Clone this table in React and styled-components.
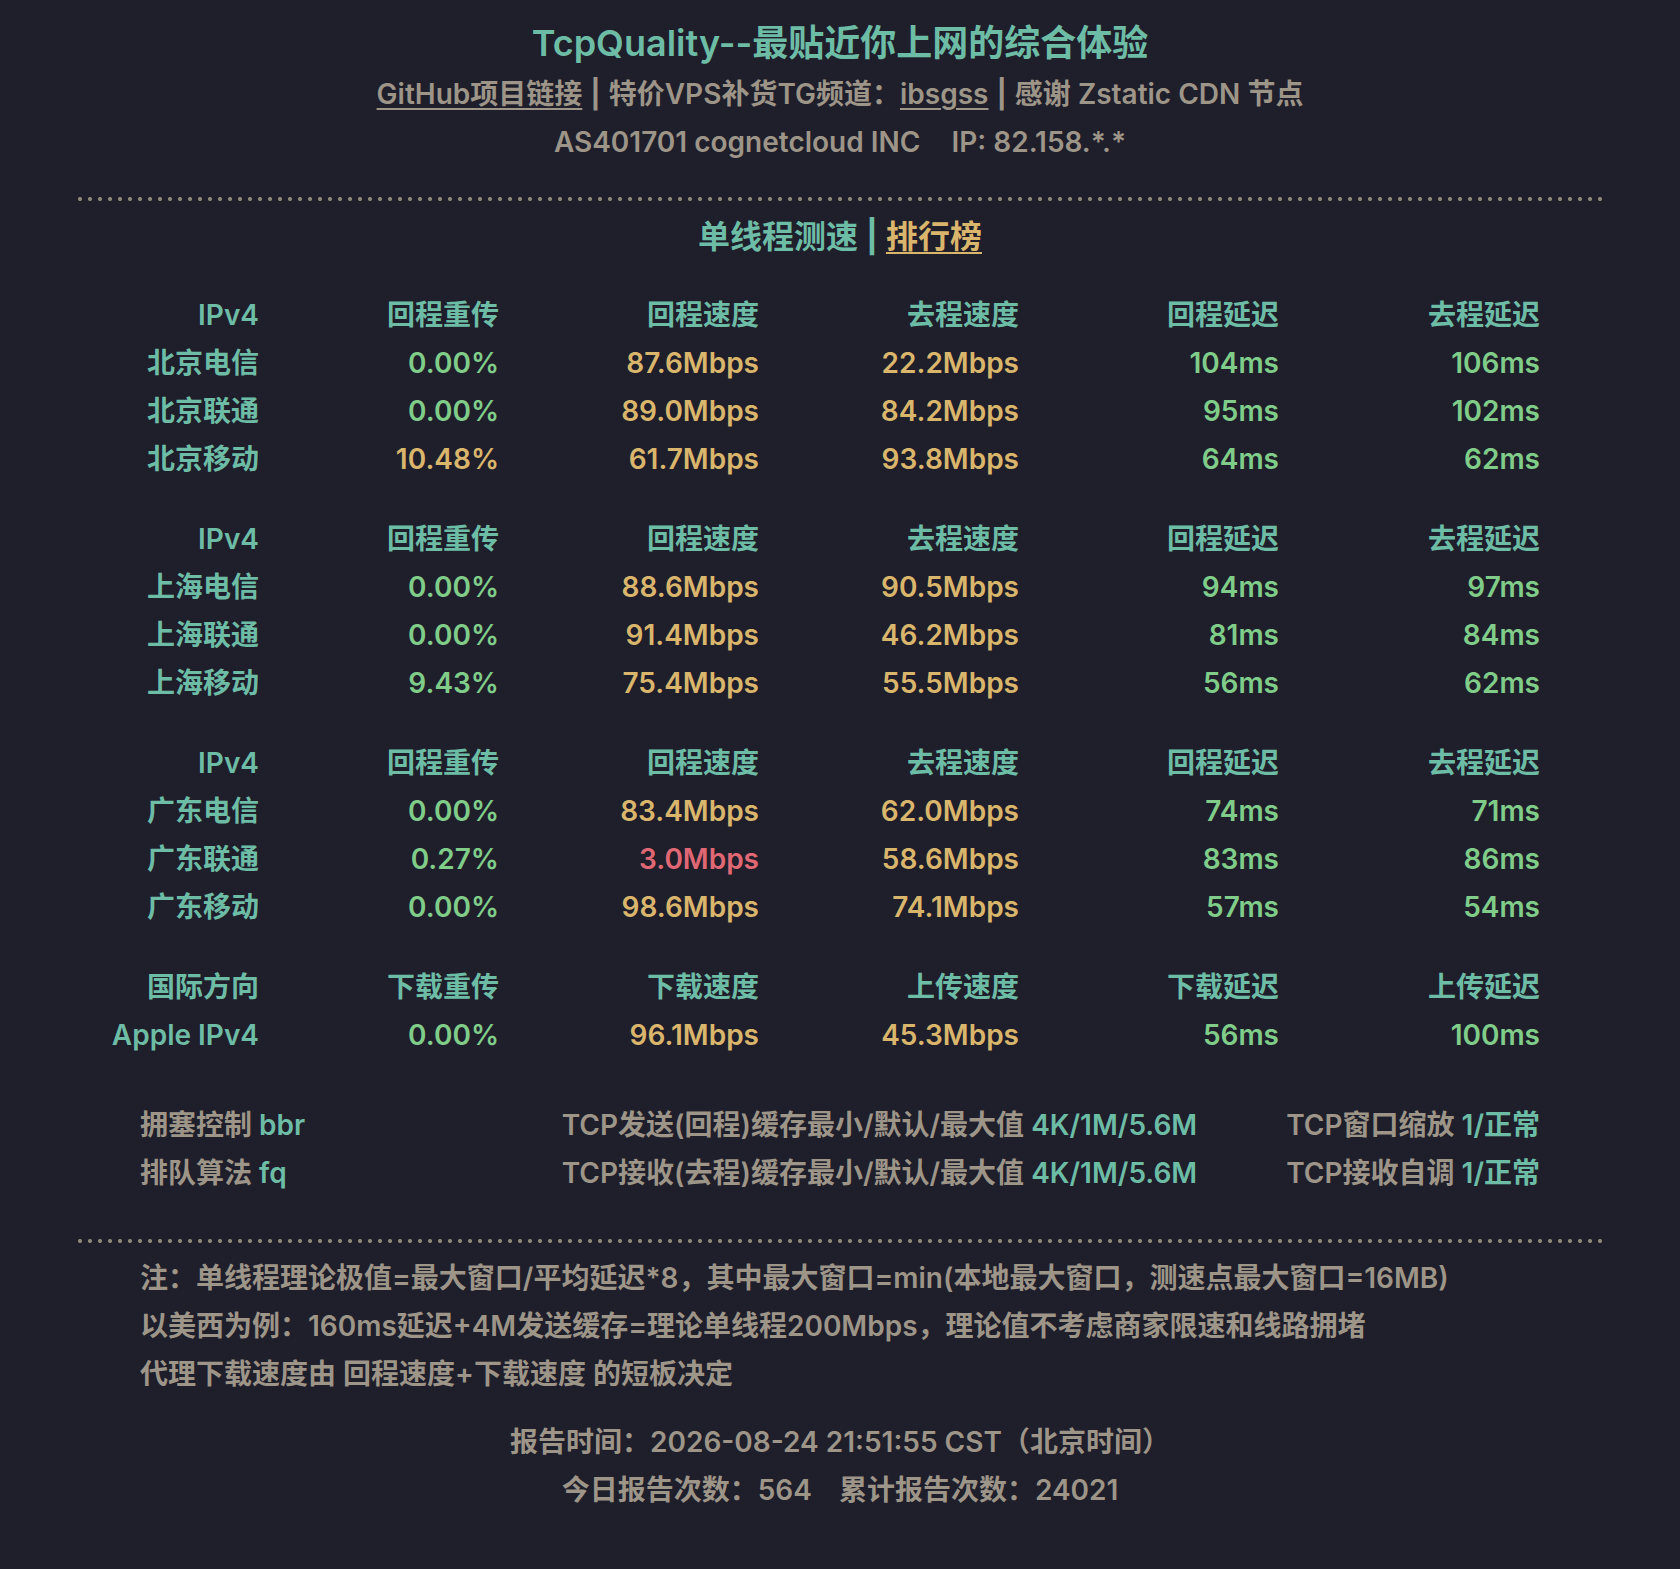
import React from 'react';
import styled, { createGlobalStyle } from 'styled-components';

const GlobalStyle = createGlobalStyle`
	html, body {
		margin: 0;
		padding: 0;
		background: #1f1e2b;
	}
	body {
		font-family: Inter, "Noto Sans CJK SC", "Noto Sans", sans-serif;
		font-weight: 600;
		color: #9d9588;
	}
`;

const colors = {
	teal: '#6dbca6',
	green: '#7fcd89',
	yellow: '#dab66c',
	red: '#e06874',
	gray: '#9d9588',
};

const Page = styled.div`
	width: 1524px;
	margin: 0 auto;
	padding: 18px 0 60px;
`;

const Title = styled.h1`
	margin: 0;
	font-size: 36px;
	line-height: 50px;
	font-weight: 600;
	text-align: center;
	color: ${colors.teal};
`;

const Line = styled.div`
	font-size: 28px;
	line-height: 48px;
	text-align: center;
	color: ${colors.gray};
	margin-top: ${({ $mt }) => $mt || 0}px;
`;

const Link = styled.a`
	color: ${({ $color }) => $color || colors.gray};
	text-decoration: underline;
	text-decoration-thickness: 2px;
	text-underline-offset: 4px;
`;

const Pipe = styled.span`
	margin: 0 8px;
	font-weight: 700;
	color: ${({ $color }) => $color || colors.gray};
`;

const Gap = styled.span`
	display: inline-block;
	width: ${({ $w }) => $w}px;
`;

const Dotted = styled.div`
	height: 4px;
	margin-top: ${({ $mt }) => $mt}px;
	background-image: radial-gradient(circle, #8a8577 1.8px, transparent 2.3px);
	background-size: 10px 4px;
	background-position: -3px 0;
`;

const Subtitle = styled.div`
	margin-top: 12px;
	font-size: 32px;
	line-height: 48px;
	text-align: center;
	color: ${colors.teal};
`;

const Tables = styled.div`
	margin-top: 30px;
	display: flex;
	flex-direction: column;
	gap: 32px;
`;

const Block = styled.div`
	display: grid;
	grid-template-columns: 181px 240px 260px 260px 260px 261px;
	font-size: 28px;
	line-height: 48px;
`;

const Cell = styled.div`
	text-align: right;
	white-space: nowrap;
	color: ${({ $color }) => $color};
`;

const Params = styled.div`
	margin-top: 42px;
	padding: 0 62px;
	display: grid;
	grid-template-columns: 1fr auto auto;
	column-gap: 89px;
	font-size: 28px;
	line-height: 48px;
	color: ${colors.gray};
`;

const Param = styled.div`
	white-space: nowrap;
	text-align: ${({ $align }) => $align || 'left'};
`;

const Value = styled.span`
	color: ${colors.teal};
`;

const Notes = styled.div`
	margin-top: 11px;
	padding-left: 62px;
	font-size: 28px;
	line-height: 48px;
	color: ${colors.gray};
`;

const Report = styled.div`
	margin-top: 20px;
	font-size: 28px;
	line-height: 48px;
	text-align: center;
	color: ${colors.gray};
`;

const g = colors.green;
const y = colors.yellow;
const r = colors.red;

const blocks = [
	{
		head: ['IPv4', '回程重传', '回程速度', '去程速度', '回程延迟', '去程延迟'],
		rows: [
			['北京电信', ['0.00%', g], ['87.6Mbps', y], ['22.2Mbps', y], ['104ms', g], ['106ms', g]],
			['北京联通', ['0.00%', g], ['89.0Mbps', y], ['84.2Mbps', y], ['95ms', g], ['102ms', g]],
			['北京移动', ['10.48%', y], ['61.7Mbps', y], ['93.8Mbps', y], ['64ms', g], ['62ms', g]],
		],
	},
	{
		head: ['IPv4', '回程重传', '回程速度', '去程速度', '回程延迟', '去程延迟'],
		rows: [
			['上海电信', ['0.00%', g], ['88.6Mbps', y], ['90.5Mbps', y], ['94ms', g], ['97ms', g]],
			['上海联通', ['0.00%', g], ['91.4Mbps', y], ['46.2Mbps', y], ['81ms', g], ['84ms', g]],
			['上海移动', ['9.43%', g], ['75.4Mbps', y], ['55.5Mbps', y], ['56ms', g], ['62ms', g]],
		],
	},
	{
		head: ['IPv4', '回程重传', '回程速度', '去程速度', '回程延迟', '去程延迟'],
		rows: [
			['广东电信', ['0.00%', g], ['83.4Mbps', y], ['62.0Mbps', y], ['74ms', g], ['71ms', g]],
			['广东联通', ['0.27%', g], ['3.0Mbps', r], ['58.6Mbps', y], ['83ms', g], ['86ms', g]],
			['广东移动', ['0.00%', g], ['98.6Mbps', y], ['74.1Mbps', y], ['57ms', g], ['54ms', g]],
		],
	},
	{
		head: ['国际方向', '下载重传', '下载速度', '上传速度', '下载延迟', '上传延迟'],
		rows: [
			['Apple IPv4', ['0.00%', g], ['96.1Mbps', y], ['45.3Mbps', y], ['56ms', g], ['100ms', g]],
		],
	},
];

const App = () => {
	return (
		<>
			<GlobalStyle />
			<Page>
				<Title>TcpQuality--最贴近你上网的综合体验</Title>
				<Line $mt={2}>
					<Link>GitHub项目链接</Link>
					<Pipe>|</Pipe>
					特价VPS补货TG频道：<Link>ibsgss</Link>
					<Pipe>|</Pipe>
					感谢 Zstatic CDN 节点
				</Line>
				<Line>
					AS401701 cognetcloud INC<Gap $w={24} /> IP: 82.158.*.*
				</Line>
				<Dotted $mt={31} />
				<Subtitle>
					单线程测速<Pipe $color={colors.teal}>|</Pipe>
					<Link $color={colors.yellow}>排行榜</Link>
				</Subtitle>
				<Tables>
					{blocks.map((block, i) => (
						<Block key={i}>
							{block.head.map((h) => (
								<Cell key={h} $color={colors.teal}>{h}</Cell>
							))}
							{block.rows.map((row) => (
								<React.Fragment key={row[0]}>
									<Cell $color={colors.teal}>{row[0]}</Cell>
									{row.slice(1).map(([v, c], j) => (
										<Cell key={j} $color={c}>{v}</Cell>
									))}
								</React.Fragment>
							))}
						</Block>
					))}
				</Tables>
				<Params>
					<Param>拥塞控制 <Value>bbr</Value></Param>
					<Param $align='right'>TCP发送(回程)缓存最小/默认/最大值 <Value>4K/1M/5.6M</Value></Param>
					<Param $align='right'>TCP窗口缩放 <Value>1/正常</Value></Param>
					<Param>排队算法 <Value>fq</Value></Param>
					<Param $align='right'>TCP接收(去程)缓存最小/默认/最大值 <Value>4K/1M/5.6M</Value></Param>
					<Param $align='right'>TCP接收自调 <Value>1/正常</Value></Param>
				</Params>
				<Dotted $mt={42} />
				<Notes>
					<div>注：单线程理论极值=最大窗口/平均延迟*8，其中最大窗口=min(本地最大窗口，测速点最大窗口=16MB)</div>
					<div>以美西为例：160ms延迟+4M发送缓存=理论单线程200Mbps，理论值不考虑商家限速和线路拥堵</div>
					<div>代理下载速度由 回程速度+下载速度 的短板决定</div>
				</Notes>
				<Report>
					<div>报告时间：2026-08-24 21:51:55 CST（北京时间）</div>
					<div>今日报告次数：564<Gap $w={20} /> 累计报告次数：24021</div>
				</Report>
			</Page>
		</>
	);
};

export default App;
